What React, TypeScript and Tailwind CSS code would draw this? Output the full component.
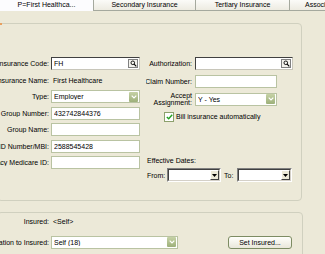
import React from "react";

function Label({ children, className = "w-[49px]" }: { children: React.ReactNode; className?: string }) {
    return (
        <div className={`flex shrink-0 justify-end overflow-hidden whitespace-nowrap ${className}`}>
            {children}
        </div>
    );
}

function SearchIcon() {
    return (
        <div className="flex h-[9px] w-[10px] items-center justify-center border border-[#808080] bg-[#F4F3EE]">
            <svg width="7" height="7" viewBox="0 0 7 7">
                <circle cx="2.8" cy="2.8" r="1.8" fill="none" stroke="#000" strokeWidth="0.9" />
                <path d="M4.1 4.1 L6.3 6.3" stroke="#000" strokeWidth="1.2" />
            </svg>
        </div>
    );
}

function TextBox({
    value = "",
    width,
    dark = false,
    search = false,
}: {
    value?: string;
    width: string;
    dark?: boolean;
    search?: boolean;
}) {
    return (
        <div
            className={`flex h-[13px] items-center bg-white pl-[2px] pr-[1px] ${width} ${
                dark
                    ? "border border-t-[#404040] border-l-[#404040] border-r-[#C8C6BA] border-b-[#C8C6BA]"
                    : "border border-[#B9C3A2]"
            }`}
        >
            <span className="flex-1 overflow-hidden whitespace-nowrap">{value}</span>
            {search && <SearchIcon />}
        </div>
    );
}

function Combo({ value = "", width }: { value?: string; width: string }) {
    return (
        <div className={`flex h-[13px] items-center border border-[#B9C3A2] bg-white pl-[2px] pr-[1px] ${width}`}>
            <span className="flex-1 overflow-hidden whitespace-nowrap">{value}</span>
            <div className="flex h-[10px] w-[9px] items-center justify-center rounded-[1px] bg-gradient-to-b from-[#C6D2A6] to-[#9DB07A]">
                <svg width="6" height="4" viewBox="0 0 6 4">
                    <path d="M0.7 0.7 L3 3 L5.3 0.7" fill="none" stroke="#fff" strokeWidth="1.2" />
                </svg>
            </div>
        </div>
    );
}

function ClassicCombo({ width }: { width: string }) {
    return (
        <div
            className={`flex h-[14px] items-center border border-t-[#808080] border-l-[#808080] border-r-white border-b-white ${width}`}
        >
            <div className="flex h-full flex-1 items-center border border-t-[#404040] border-l-[#404040] border-r-[#D4D0C8] border-b-[#D4D0C8] bg-white">
                <span className="flex-1" />
                <div className="flex h-full w-[9px] items-center justify-center border border-t-white border-l-white border-r-[#404040] border-b-[#404040] bg-[#ECE9D8]">
                    <svg width="5" height="3" viewBox="0 0 5 3">
                        <path d="M0 0 H5 L2.5 3 Z" fill="#000" />
                    </svg>
                </div>
            </div>
        </div>
    );
}

export default function App() {
    return (
        <div className="h-[254px] w-[325px] overflow-hidden bg-[#ECE9D8] font-['Liberation_Sans',Arial,sans-serif] text-[7px] leading-none text-black">
            {/* Tabs */}
            <div className="flex h-[11px]">
                <div className="flex w-[93px] items-center justify-center bg-[#FCFCFE] pb-[2px]">
                    P=First Healthca...
                </div>
                <div className="flex w-[102px] items-center justify-center border-b border-l border-[#A5A99E] bg-gradient-to-b from-[#FBFBF8] to-[#EDEBE1] pb-[2px]">
                    Secondary Insurance
                </div>
                <div className="flex w-[94px] items-center justify-center border-b border-l border-[#A5A99E] bg-gradient-to-b from-[#FBFBF8] to-[#EDEBE1] pb-[2px]">
                    Tertiary Insurance
                </div>
                <div className="flex flex-1 items-center overflow-hidden whitespace-nowrap border-b border-l border-[#A5A99E] bg-gradient-to-b from-[#FBFBF8] to-[#EDEBE1] pb-[2px] pl-[15px]">
                    Associated
                </div>
            </div>

            {/* Insurance box */}
            <div className="relative -ml-[3px] mt-[12px] h-[178px] w-[305px] rounded-[4px] border border-[#D0D0BF]">
                <div className="absolute -top-[1px] left-[2px] h-[2px] w-[2px] bg-[#E8A060]" />
                <div className="flex pl-[2px] pt-[33px]">
                    {/* Left column */}
                    <div className="flex w-[146px] flex-col gap-[3.5px]">
                        <div className="flex h-[13px] items-center gap-[2px]">
                            <Label>Insurance Code:</Label>
                            <TextBox value="FH" width="w-[89px]" dark search />
                        </div>
                        <div className="flex h-[13px] items-center gap-[4px]">
                            <Label>Insurance Name:</Label>
                            <span>First Healthcare</span>
                        </div>
                        <div className="flex h-[13px] items-center gap-[2px]">
                            <Label>Type:</Label>
                            <Combo value="Employer" width="w-[89px]" />
                        </div>
                        <div className="flex h-[13px] items-center gap-[2px]">
                            <Label>Group Number:</Label>
                            <TextBox value="432742844376" width="w-[89px]" />
                        </div>
                        <div className="flex h-[13px] items-center gap-[2px]">
                            <Label>Group Name:</Label>
                            <TextBox width="w-[89px]" />
                        </div>
                        <div className="flex h-[13px] items-center gap-[2px]">
                            <Label>Patient ID Number/MBI:</Label>
                            <TextBox value="2588545428" width="w-[89px]" />
                        </div>
                        <div className="flex h-[13px] items-center gap-[2px]">
                            <Label>Legacy Medicare ID:</Label>
                            <TextBox width="w-[89px]" />
                        </div>
                    </div>

                    {/* Right column */}
                    <div className="flex flex-col">
                        <div className="flex h-[13px] items-center gap-[3px]">
                            <Label className="w-[46px]">Authorization:</Label>
                            <TextBox width="w-[98px]" dark search />
                        </div>
                        <div className="mt-[5px] flex h-[13px] items-center gap-[3px]">
                            <Label className="w-[46px]">Claim Number:</Label>
                            <TextBox width="w-[82px]" />
                        </div>
                        <div className="mt-[3px] flex h-[16px] items-center gap-[3px]">
                            <div className="w-[46px] text-right leading-[7px]">
                                Accept
                                <br />
                                Assignment:
                            </div>
                            <Combo value="Y - Yes" width="w-[82px]" />
                        </div>
                        <div className="mt-[4px] flex h-[11px] items-center gap-[2px] pl-[18px]">
                            <div className="flex h-[10px] w-[10px] items-center justify-center border border-[#8CA06C] bg-white">
                                <svg width="7" height="6" viewBox="0 0 7 6">
                                    <path d="M0.8 3 L2.7 4.8 L6.2 0.8" fill="none" stroke="#21A121" strokeWidth="1.4" />
                                </svg>
                            </div>
                            <span>Bill insurance automatically</span>
                        </div>
                        <div className="mt-[35px] pl-[1px]">Effective Dates:</div>
                        <div className="mt-[4px] flex h-[14px] items-center pl-[1px]">
                            <span className="w-[20px]">From:</span>
                            <ClassicCombo width="w-[54px]" />
                            <span className="ml-[3px] w-[13px]">To:</span>
                            <ClassicCombo width="w-[55px]" />
                        </div>
                    </div>
                </div>
            </div>

            {/* Insured box */}
            <div className="-ml-[3px] mt-[11px] h-[60px] w-[306px] rounded-[4px] border border-[#D0D0BF]">
                <div className="flex flex-col pl-[2px] pt-[3px]">
                    <div className="flex h-[10px] items-center gap-[4px]">
                        <Label>Insured:</Label>
                        <span>&lt;Self&gt;</span>
                    </div>
                    <div className="mt-[9px] flex h-[14px] items-center">
                        <Label>Relation to Insured:</Label>
                        <div className="ml-[2px]">
                            <Combo value="Self (18)" width="w-[127px]" />
                        </div>
                        <button className="ml-[50px] flex h-[13px] w-[64px] items-center justify-center rounded-[3px] border border-[#7D8C63] bg-gradient-to-b from-[#FFFFFB] to-[#E9E7DA] text-[7px]">
                            Set Insured...
                        </button>
                    </div>
                </div>
            </div>
        </div>
    );
}
